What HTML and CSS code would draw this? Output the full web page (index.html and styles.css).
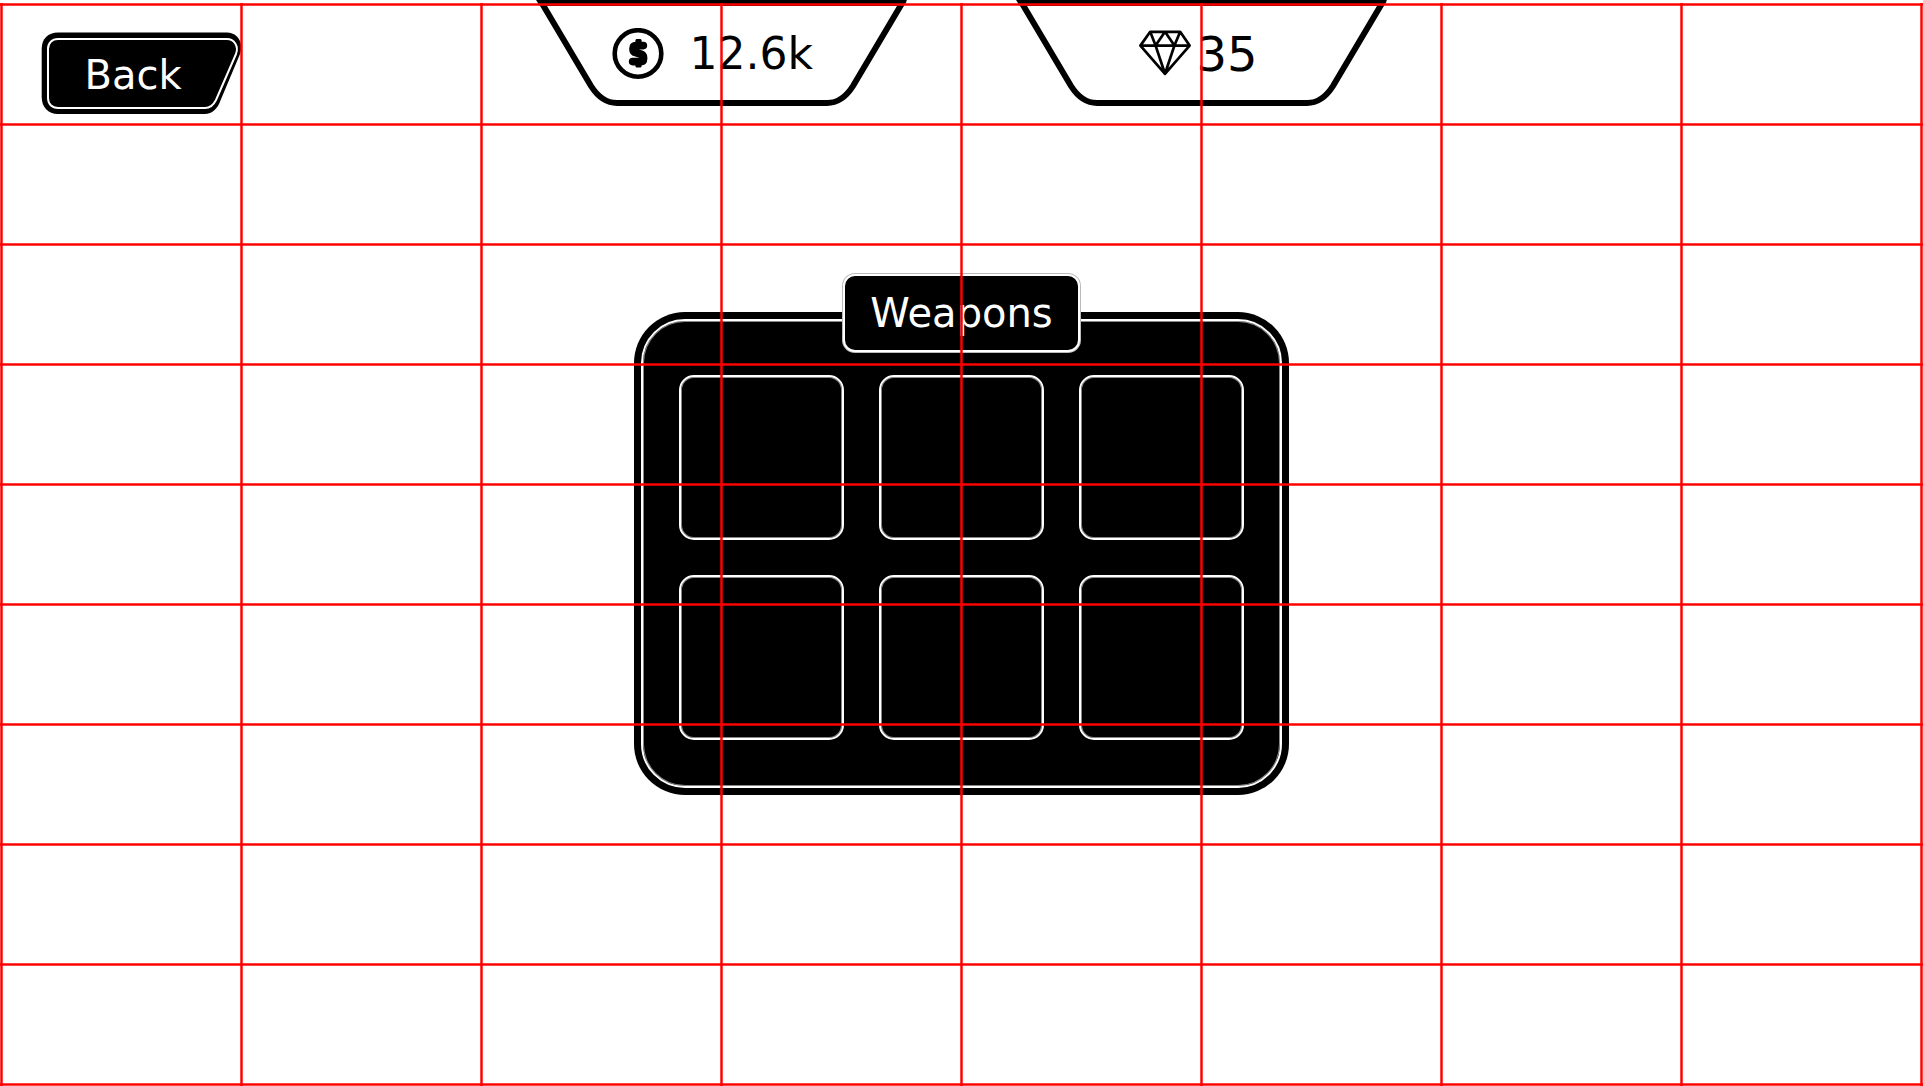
FILE: index.html
```html
<!DOCTYPE html>
<html lang="en">
<head>
  <meta charset="utf-8">
  <meta name="viewport" content="width=device-width, initial-scale=1">
  <title>Weapons</title>
  <link rel="stylesheet" href="styles.css">
</head>
<body>
  <header class="top-bar">
    <button class="back" type="button">
      <svg class="frame" viewBox="0 0 200 82" aria-hidden="true">
        <path d="M17 .6H186C196 .6 203 10 199 22L178 72C175 78 170 82 164 82H17C7 82 .7 75 .7 65V17C.7 7 7 .6 17 .6Z"/>
        <path class="frame-line" d="M17 7H186C193 7 198 14 195 22L175 68C172 74 169 76 164 76H17C11 76 7 72 7 66V17C7 11 11 7 17 7Z"/>
      </svg>
      <span class="back-label">Back</span>
    </button>

    <div class="counters">
      <div class="counter counter-coins">
        <svg class="frame" viewBox="0 0 372 107" aria-hidden="true">
          <path d="M0 0H371L367 6H4Z"/>
          <path class="frame-edge" d="M4 0L55 86C62 97 71 103 81 103H291C301 103 310 97 317 86L368 0"/>
        </svg>
        <svg class="icon" viewBox="0 0 52 52" role="img" aria-label="Coins">
          <circle cx="26" cy="25.5" r="23.3" fill="none" stroke="#000" stroke-width="4.6"/>
          <path d="M31.4 17.6H24Q21 17.6 21 20.4V21.6Q21 24.4 24 24.8L28.6 26Q31.6 26.8 31.6 29.8V30.4Q31.6 33.6 28.6 33.6H20.6" fill="none" stroke="#000" stroke-width="7.6" stroke-linejoin="round" stroke-linecap="round"/>
          <path d="M24.4 11H28.6L29.6 12V16H23.4V12ZM23.4 35H29.6V38.6L28.6 39.6H24.4L23.4 38.6Z"/>
        </svg>
        <span>12.6k</span>
      </div>
      <div class="counter counter-gems">
        <svg class="frame" viewBox="0 0 372 107" aria-hidden="true">
          <path d="M0 0H371L367 6H4Z"/>
          <path class="frame-edge" d="M4 0L55 86C62 97 71 103 81 103H291C301 103 310 97 317 86L368 0"/>
        </svg>
        <svg class="icon" viewBox="0 0 52 52" role="img" aria-label="Gems">
          <path d="M11.2 3.8H41.2L50.6 17.6L26 45.8L1.4 17.6ZM1.4 17.6H50.6M11.2 3.8L16.6 17.6L26 3.8L35.4 17.6L41.2 3.8M16.6 17.6L26 45.8L35.4 17.6" fill="none" stroke="#000" stroke-width="2.7" stroke-linejoin="round"/>
        </svg>
        <span>35</span>
      </div>
    </div>
  </header>

  <main class="stage">
    <h1 class="title">Weapons</h1>
    <section class="panel" aria-label="Weapon slots">
      <ul class="slots">
        <li class="slot"></li>
        <li class="slot"></li>
        <li class="slot"></li>
        <li class="slot"></li>
        <li class="slot"></li>
        <li class="slot"></li>
      </ul>
    </section>
  </main>

  <div class="guides" aria-hidden="true"></div>
</body>
</html>
```
FILE: styles.css
```css
* {
  box-sizing: border-box;
}

body {
  position: relative;
  min-height: 100vh;
  margin: 0;
  background: #fff;
  color: #000;
  font-family: "DejaVu Sans", sans-serif;
}

.top-bar {
  display: grid;
  grid-template-columns: 1fr auto 1fr;
  align-items: start;
}

/* Outline drawn behind a button or counter */
.frame {
  position: absolute;
  inset: 0;
  width: 100%;
  height: 100%;
}

.frame-line {
  fill: none;
  stroke: #fff;
  stroke-width: 2;
}

.frame-edge {
  fill: none;
  stroke: #000;
  stroke-width: 6;
}

.back {
  position: relative;
  justify-self: start;
  width: 200px;
  height: 82px;
  margin: 32px 0 0 41px;
  padding: 3px 16px 0 0;
  border: 0;
  background: none;
  color: #fff;
  font: inherit;
  font-size: 40px;
  line-height: 48px;
  cursor: pointer;
}

.back-label {
  position: relative;
}

.counters {
  display: flex;
  gap: 108px;
}

.counter {
  position: relative;
  display: flex;
  align-items: center;
  width: 372px;
  height: 107px;
  line-height: 52px;
}

.counter-coins {
  gap: 26px;
  padding-left: 76px;
  font-size: 44px;
}

.counter-gems {
  gap: 6px;
  padding-left: 123px;
  font-size: 48px;
}

.icon {
  width: 52px;
  height: 52px;
}

.stage {
  display: flex;
  flex-direction: column;
  align-items: center;
  padding-top: 160px;
}

.title {
  z-index: 1;
  width: 237px;
  margin: 0 0 -40px;
  padding: 13px 0;
  border: 2px solid #fff;
  border-radius: 12px;
  box-shadow: 0 0 0 1px #bbb;
  background: #000;
  color: #fff;
  font-size: 40px;
  font-weight: 400;
  line-height: 48px;
  text-align: center;
}

.panel {
  padding: 7px;
  border-radius: 51px;
  background: #000;
}

.slots {
  display: grid;
  grid-template-columns: repeat(3, 165px);
  gap: 35px;
  margin: 0;
  padding: 54px 36px 46px;
  border: 2px solid #fff;
  border-radius: 44px;
  box-shadow: inset 0 0 0 1px #888;
  list-style: none;
}

.slot {
  height: 165px;
  border: 2px solid #fff;
  border-radius: 15px;
  box-shadow: inset 0 0 0 1px #888;
}

/* Layout guides laid over the whole screen, one cell is 240 by 120 */
.guides {
  position: absolute;
  inset: 3px 0 0;
  background-image:
    linear-gradient(to right, #ff0000bb 1px, #f00 1px 2px, #ff0000bb 2px 3px, transparent 3px),
    linear-gradient(to bottom, #ff0000bb 1px, #f00 1px 2px, #ff0000bb 2px 3px, transparent 3px);
  background-size: 240px 120px;
  pointer-events: none;
  z-index: 2;
}
```
